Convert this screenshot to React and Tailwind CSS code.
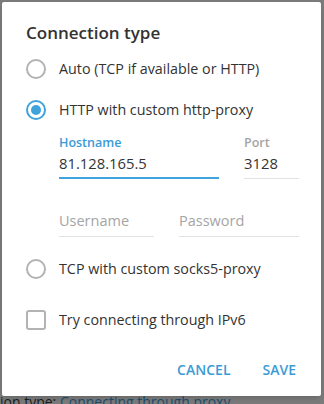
import React from 'react';

const blue = 'text-[#3b9bd6]';

const Radio = ({ checked, label }) => (
  <div className="flex items-center h-[41px]">
    <div
      className={`w-[20px] h-[20px] rounded-full border-2 flex items-center justify-center ${
        checked ? 'border-[#40a3dc]' : 'border-[#b3b3b3]'
      }`}
    >
      {checked && <div className="w-[10px] h-[10px] rounded-full bg-[#40a3dc]" />}
    </div>
    <span className="ml-[13px] text-[14.3px] text-[#333]">{label}</span>
  </div>
);

const Field = ({ label, value, active, className }) => (
  <div className={`shrink-0 ${className}`}>
    <div className={`h-[16px] leading-[16px] text-[12.5px] font-semibold ${active ? blue : 'text-[#a5a5a5]'}`}>
      {label}
    </div>
    <div className="mt-[2px] h-[20px] leading-[20px] text-[14.8px] text-[#333]">{value}</div>
    {active ? (
      <div className="mt-[4px] h-[2px] bg-[#40a3dc]" />
    ) : (
      <div className="mt-[5px] h-px bg-[#e3e3e3]" />
    )}
  </div>
);

const Placeholder = ({ label, className }) => (
  <div className={`shrink-0 ${className}`}>
    <div className="h-[20px] leading-[20px] text-[14.5px] text-[#a5a5a5]">{label}</div>
    <div className="mt-[5px] h-px bg-[#e3e3e3]" />
  </div>
);

export default function App() {
  return (
    <div
      className="w-[324px] h-[404px] bg-[#7b7b7b] overflow-hidden"
      style={{ fontFamily: '"Open Sans", "Noto Sans", sans-serif' }}
    >
      <div className="relative z-10 ml-[2px] mt-[2px] w-[319px] h-[394px] bg-white rounded-[2px] shadow-md pt-[20px] pl-[24px] pr-[22px]">
        {/* Title */}
        <div className="h-[22px] leading-[22px] text-[17px] font-semibold text-[#333]">
          Connection type
        </div>

        <div className="mt-[4px]">
          <Radio label="Auto (TCP if available or HTTP)" />
          <Radio checked label="HTTP with custom http-proxy" />
        </div>

        {/* Proxy fields */}
        <div className="pl-[33px] mt-[5px]">
          <div className="flex">
            <Field label="Hostname" value="81.128.165.5" active className="w-[160px]" />
            <Field label="Port" value="3128" className="ml-[25px] w-[55px]" />
          </div>
          <div className="flex mt-[32px]">
            <Placeholder label="Username" className="w-[95px]" />
            <Placeholder label="Password" className="ml-[25px] w-[120px]" />
          </div>
        </div>

        <div className="mt-[11px]">
          <Radio label="TCP with custom socks5-proxy" />
        </div>

        {/* IPv6 */}
        <div className="flex items-center h-[40px] mt-[11px]">
          <div className="w-[20px] h-[20px] rounded-[3px] border-2 border-[#b3b3b3]" />
          <span className="ml-[13px] text-[14.3px] text-[#333]">Try connecting through IPv6</span>
        </div>

        {/* Actions */}
        <div className={`flex justify-end gap-[32px] mt-[20px] mr-[3px] h-[20px] leading-[20px] text-[14px] font-semibold ${blue}`}>
          <span>CANCEL</span>
          <span>SAVE</span>
        </div>
      </div>

      {/* page behind the overlay */}
      <div className="-mt-[1px] h-[14px] leading-[14px] text-[14px] whitespace-nowrap text-[#1c1c1c]">
        ion type: <span className="text-[#1e4d6d]">Connecting through proxy...</span>
      </div>
    </div>
  );
}
